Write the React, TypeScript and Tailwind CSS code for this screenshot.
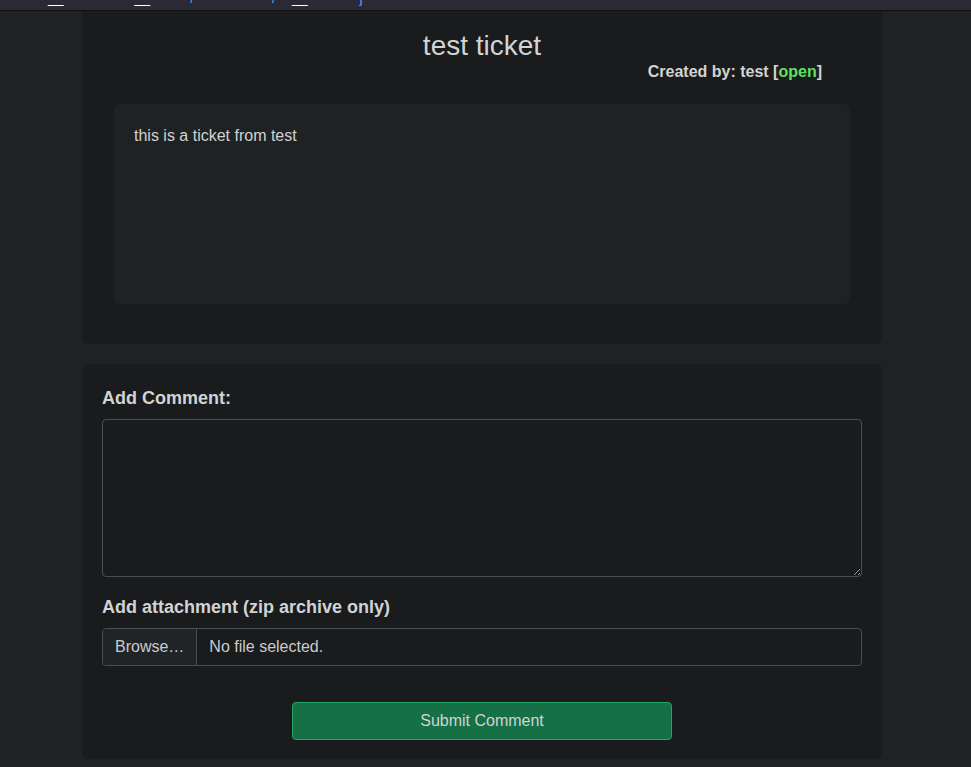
import { useState } from 'react';

export default function App() {
  const [comment, setComment] = useState('');

  return (
    <div className="min-h-screen bg-[#1f2223] font-['Liberation_Sans',Arial,sans-serif] text-[#d1d3d4]">
      {/* header line scrolled mostly out of view */}
      <div className="h-[11px] bg-[#2a2934] border-b border-[#111214] overflow-hidden">
        <div className="flex items-start -mt-[14px] text-[14px] leading-[24px] whitespace-nowrap">
          <span className="ml-[48px] text-white">__</span>
          <span className="ml-[71px] text-white">__</span>
          <span className="ml-[40px] text-[#4aa3ff]">/</span>
          <span className="ml-[78px] text-[#4aa3ff]">/</span>
          <span className="ml-[16px] text-white">__</span>
          <span className="ml-[52px] text-[#4aa3ff]">j</span>
        </div>
      </div>

      <div className="ml-[82px] w-[800px]">
        <div className="bg-[#1a1b1d] rounded-b-md px-8 pt-[19px] pb-10">
          <h1 className="text-[28px] leading-[32px] text-center text-[#d1d3d4]">test ticket</h1>
          <p className="text-right pr-7 text-[16px] leading-[20px] font-bold mb-[22px]">
            Created by: test [<span className="text-[#5fe05f]">open</span>]
          </p>
          <div className="bg-[#1f2223] rounded-md h-[200px] px-5 pt-[22px]">
            <p className="text-[16px] leading-[20px]">this is a ticket from test</p>
          </div>
        </div>

        <form
          onSubmit={(e) => e.preventDefault()}
          className="mt-[20px] bg-[#1a1b1d] rounded-md px-5 pt-[21px] pb-[19px]"
        >
          <label className="block text-[18px] leading-[27px] font-bold mb-[7px]">Add Comment:</label>
          <textarea
            value={comment}
            onChange={(e) => setComment(e.target.value)}
            className="block w-full h-[158px] bg-[#1a1b1d] border border-[#4a4e52] rounded-[4px] px-3 py-2 text-[16px] text-[#d1d3d4] outline-none"
          />
          <label className="block mt-[17px] text-[18px] leading-[27px] font-bold mb-[7px]">
            Add attachment (zip archive only)
          </label>
          <div className="flex h-[38px] border border-[#4a4e52] rounded-[4px] overflow-hidden text-[16px]">
            <div className="flex items-center px-3 bg-[#212427] border-r border-[#4a4e52] text-[#c9cbcd]">Browse…</div>
            <div className="flex items-center px-3 text-[#c9cbcd]">No file selected.</div>
          </div>
          <div className="flex justify-center mt-[36px]">
            <button
              type="submit"
              className="w-[380px] h-[38px] bg-[#157045] border border-[#22a566] rounded-[4px] text-[16px] text-[#d1d3d4]"
            >
              Submit Comment
            </button>
          </div>
        </form>
      </div>
    </div>
  );
}
